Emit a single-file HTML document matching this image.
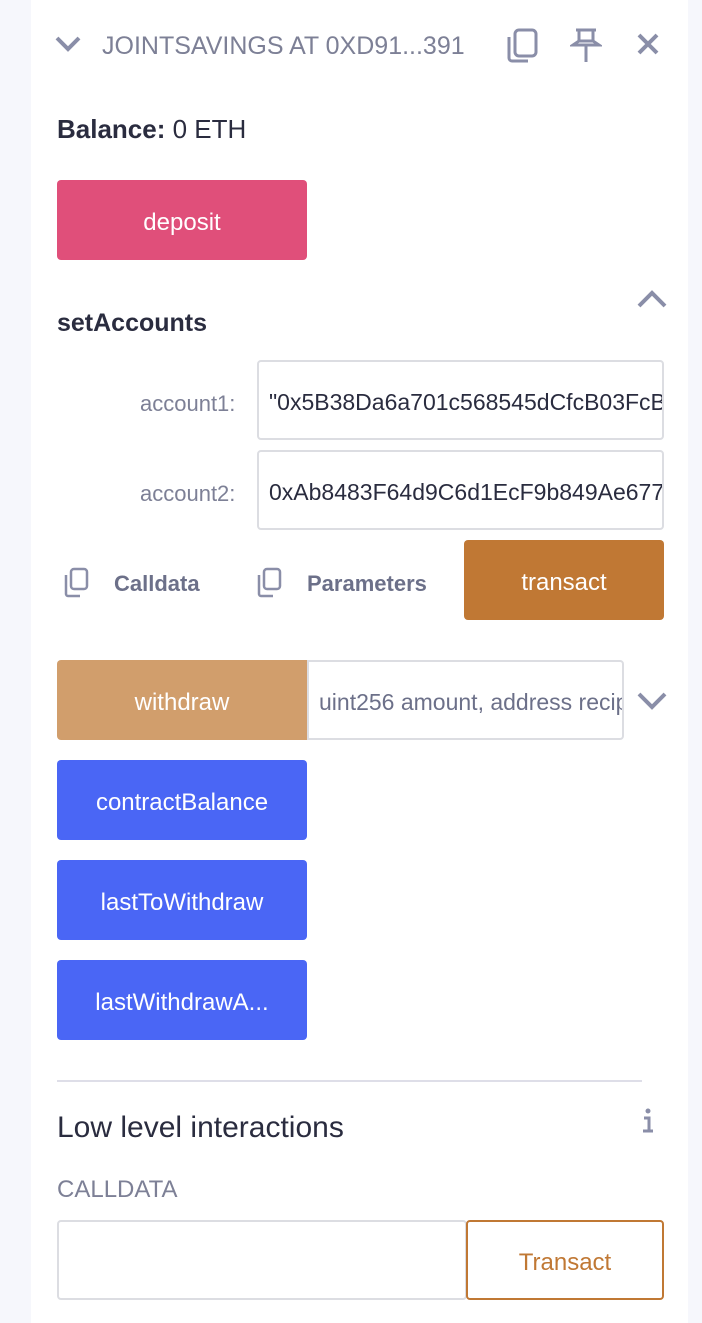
<!DOCTYPE html>
<html><head><meta charset="utf-8"><style>
*{box-sizing:border-box;margin:0;padding:0}
body{width:702px;height:1323px;background:#f6f7fc;font-family:"Liberation Sans",sans-serif;position:relative;overflow:hidden}
.panel{position:absolute;left:31px;top:0;width:657px;height:1323px;background:#fff}
.a{position:absolute;white-space:nowrap}
.btn{position:absolute;border-radius:4px;color:#fff;font-size:24px;display:flex;align-items:center;justify-content:center;padding-top:6px}
.inp{position:absolute;border:2px solid #dcdde2;border-radius:4px;background:#fff;font-size:23px;color:#2a2c3f;padding-left:10px;padding-top:4px;display:flex;align-items:center;overflow:hidden;white-space:nowrap}
</style></head><body>
<div class="panel"></div>
<svg class="a" style="left:54px;top:34px" width="28" height="20" viewBox="0 0 28 20"><path d="M3 4 L14 15 L25 4" stroke="#8a8ea8" stroke-width="4" fill="none"/></svg>
<div class="a" style="left:102px;top:32px;font-size:25px;color:#7d8096;width:372px;overflow:hidden">JOINTSAVINGS AT 0XD91...391</div>
<svg class="a" style="left:504px;top:27px" width="36" height="36" viewBox="0 0 36 36"><rect x="11" y="3" width="21" height="26" rx="4" stroke="#8a8ea8" stroke-width="3" fill="none"/><path d="M5 10 V31 a3 3 0 0 0 3 3 H24" stroke="#8a8ea8" stroke-width="3" fill="none"/></svg>
<svg class="a" style="left:570px;top:27px" width="32" height="36" viewBox="0 0 32 36"><path d="M6 3 H26 M9 3 V14 M23 3 V14 M3 18 H29 L23 14 H9 Z M16 18 V35" stroke="#8a8ea8" stroke-width="3" fill="none"/></svg>
<svg class="a" style="left:636px;top:32px" width="24" height="24" viewBox="0 0 24 24"><path d="M3 3 L21 21 M21 3 L3 21" stroke="#8a8ea8" stroke-width="4"/></svg>
<div class="a" style="left:57px;top:114px;font-size:26px;color:#2a2c3f"><b>Balance:</b> 0 ETH</div>
<div class="btn" style="left:57px;top:180px;width:250px;height:80px;background:#e04f7a">deposit</div>
<svg class="a" style="left:636px;top:288px" width="32" height="22" viewBox="0 0 32 22"><path d="M3 18 L16 5 L29 18" stroke="#8a8ea8" stroke-width="4" fill="none"/></svg>
<div class="a" style="left:57px;top:309px;font-size:25px;font-weight:bold;color:#2a2c3f">setAccounts</div>
<div class="a" style="left:140px;top:391px;font-size:22px;color:#7d8096">account1:</div>
<div class="inp" style="left:257px;top:360px;width:407px;height:80px">"0x5B38Da6a701c568545dCfcB03FcB875f56beddC4"</div>
<div class="a" style="left:140px;top:481px;font-size:22px;color:#7d8096">account2:</div>
<div class="inp" style="left:257px;top:450px;width:407px;height:80px">0xAb8483F64d9C6d1EcF9b849Ae677dD3315835cb2</div>
<svg class="a" style="left:62px;top:567px" width="28" height="32" viewBox="0 0 28 32"><rect x="9" y="2" width="16" height="20" rx="3" stroke="#8a8ea8" stroke-width="2.5" fill="none"/><path d="M4 8 V27 a2 2 0 0 0 2 2 H18" stroke="#8a8ea8" stroke-width="2.5" fill="none"/></svg>
<div class="a" style="left:114px;top:571px;font-size:22px;font-weight:bold;color:#6c7089">Calldata</div>
<svg class="a" style="left:255px;top:567px" width="28" height="32" viewBox="0 0 28 32"><rect x="9" y="2" width="16" height="20" rx="3" stroke="#8a8ea8" stroke-width="2.5" fill="none"/><path d="M4 8 V27 a2 2 0 0 0 2 2 H18" stroke="#8a8ea8" stroke-width="2.5" fill="none"/></svg>
<div class="a" style="left:307px;top:571px;font-size:22px;font-weight:bold;color:#6c7089">Parameters</div>
<div class="btn" style="left:464px;top:540px;width:200px;height:80px;background:#c07834">transact</div>
<div class="btn" style="left:57px;top:660px;width:250px;height:80px;background:#d19e6c;border-radius:4px 0 0 4px">withdraw</div>
<div class="inp" style="left:307px;top:660px;width:317px;height:80px;color:#6c7089;border-radius:0 4px 4px 0">uint256 amount, address recipient</div>
<svg class="a" style="left:636px;top:690px" width="32" height="22" viewBox="0 0 32 22"><path d="M3 4 L16 17 L29 4" stroke="#8a8ea8" stroke-width="4" fill="none"/></svg>
<div class="btn" style="left:57px;top:760px;width:250px;height:80px;background:#4a66f5">contractBalance</div>
<div class="btn" style="left:57px;top:860px;width:250px;height:80px;background:#4a66f5">lastToWithdraw</div>
<div class="btn" style="left:57px;top:960px;width:250px;height:80px;background:#4a66f5">lastWithdrawA...</div>
<div class="a" style="left:57px;top:1080px;width:585px;height:2px;background:#dedee8"></div>
<div class="a" style="left:57px;top:1111px;font-size:30px;color:#2a2c3f">Low level interactions</div>
<svg class="a" style="left:638px;top:1108px" width="20" height="26" viewBox="0 0 20 26"><circle cx="10" cy="3" r="2.5" fill="#8a8ea8"/><path d="M6 10 H11 V23 M5 23 H15" stroke="#8a8ea8" stroke-width="3" fill="none"/></svg>
<div class="a" style="left:57px;top:1176px;font-size:24px;color:#7d8096">CALLDATA</div>
<div class="inp" style="left:57px;top:1220px;width:410px;height:80px"></div>
<div class="btn" style="left:466px;top:1220px;width:198px;height:80px;border:2px solid #c07834;color:#c07834;background:#fff">Transact</div>
</body></html>
